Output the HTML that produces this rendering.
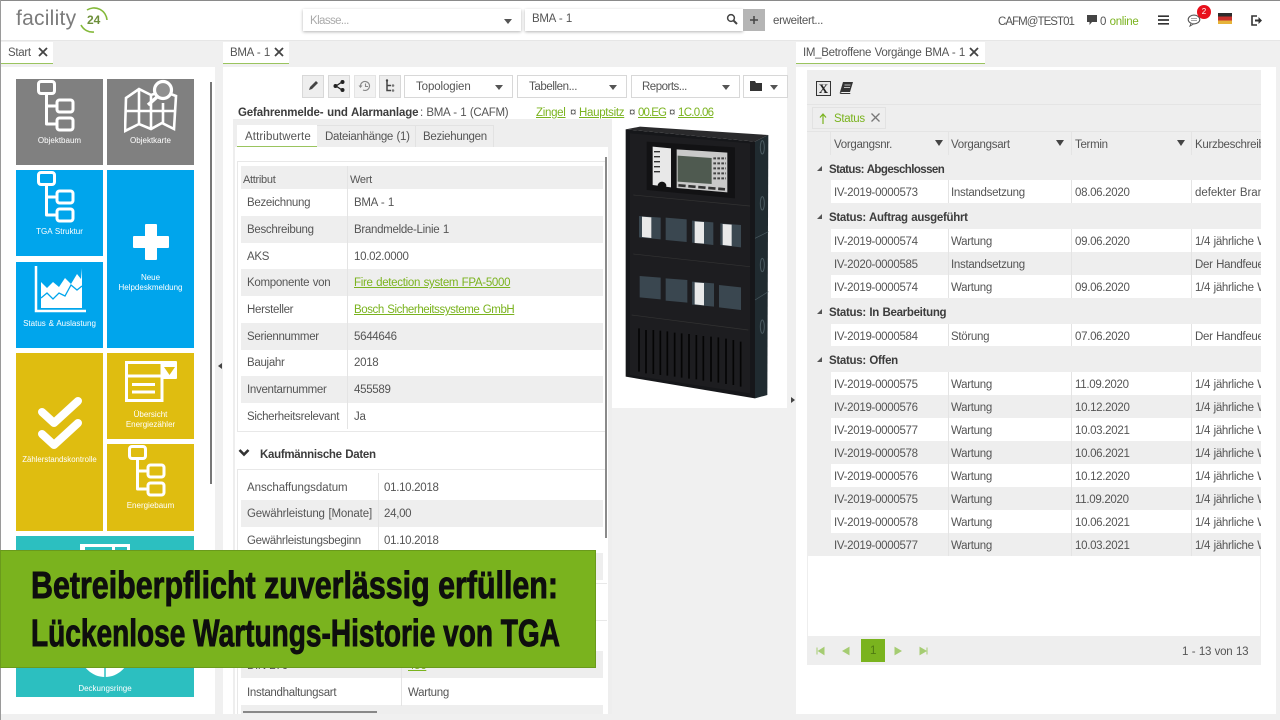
<!DOCTYPE html>
<html lang="de"><head><meta charset="utf-8"><title>facility 24</title>
<style>
html,body{margin:0;padding:0;width:1280px;height:720px;overflow:hidden;background:#f0f0f0}
body{position:relative;font:11.5px/16px "Liberation Sans",sans-serif;letter-spacing:-.3px;word-spacing:.6px;color:#555}
div,span,a,b,svg{position:absolute;display:block}
span,a,b{white-space:nowrap;margin-top:1px}
a{color:#7ab31e;text-decoration:underline}
b{color:#3c3c3c}
.p{background:#fff}
.g{background:#eee}
.tab{background:#fff;border-bottom:1px solid #9ac45e;height:21px;top:42px}
.tile{color:#fff;font-size:8px;line-height:10px;letter-spacing:0;text-align:center}
.tile span{left:0;right:0;white-space:normal}
.btn{top:75px;width:20px;height:21px;background:#eee;border:1px solid #d8d8d8}
.dd{top:75px;height:21px;background:#fff;border:1px solid #d8d8d8}
.dd span{left:11px;top:2px;letter-spacing:-.1px}
.dd i{position:absolute;right:9px;top:9px;border:4px solid transparent;border-top:5px solid #555;border-bottom:0}
.row{left:241px;width:362px;height:27px}
.row span,.row a{top:5px}
.k{left:6px}.v{left:113px}
.col{width:1px;background:#e4e4e4}
.gr{left:807px;width:454px;height:23px;background:#eee}
.gr b{left:22px;top:4px}
.gr i{position:absolute;left:10px;top:9px;width:0;height:0;border-left:5px solid transparent;border-bottom:5px solid #555}
.tr{left:831px;width:430px;height:23px;background:#fff}
.tr.o{background:#eee}
.tr span{top:4px}
.c1{left:3px}.c2{left:120px}.c3{left:244px}.c4{left:364px;width:66px;overflow:hidden}
.hd{top:136px}
.ft{top:140px;width:0;height:0;border:4px solid transparent;border-top:6px solid #444;border-bottom:0}
</style></head><body>
<svg width="0" height="0" style="position:absolute"><defs>
<symbol id="tree" viewBox="0 0 38 52"><g fill="none" stroke="#fff" stroke-width="3" stroke-linejoin="round"><rect x="1.500" y="1.500" width="16" height="12" rx="2.500"/><rect x="20" y="20" width="16" height="12" rx="2.500"/><rect x="20" y="38" width="16" height="12" rx="2.500"/><path d="M9.500 13.500V44H20M9.500 26H20"/></g></symbol>
</defs></svg>

<!-- top bar -->
<div style="left:0;top:0;width:1280px;height:40px;background:#fff;border-bottom:1px solid #e6e6e6"></div>
<div style="left:0;top:0;width:1280px;height:1px;background:#8a8a8a"></div>
<div style="left:0;top:0;width:1px;height:720px;background:#9a9a9a"></div>
<span style="left:16px;top:6px;font-size:21px;line-height:24px;color:#7b7b7b;letter-spacing:.25px">facility</span>
<svg style="left:78px;top:4px" width="34" height="32" viewBox="0 0 34 32"><path d="M9 6A13 13 0 0 1 29 16" fill="none" stroke="#84b93a" stroke-width="1.600"/><path d="M3 21A13 13 0 0 0 16 28" fill="none" stroke="#84b93a" stroke-width="1.600"/><text x="9" y="20" font-family="Liberation Sans" font-size="12" font-weight="bold" fill="#6d8f3a" letter-spacing="0">24</text></svg>

<div style="left:303px;top:9px;width:218px;height:22px;background:#fff;box-shadow:0 1px 3px rgba(0,0,0,.3)"></div>
<span style="left:310px;top:12px;color:#aaa;letter-spacing:-.6px">Klasse...</span>
<div style="left:504px;top:19px;border:4px solid transparent;border-top:5px solid #555;border-bottom:0;width:0;height:0"></div>
<div style="left:525px;top:9px;width:218px;height:22px;background:#fff;box-shadow:0 1px 3px rgba(0,0,0,.3)"></div>
<span style="left:532px;top:10px">BMA - 1</span>
<svg style="left:726px;top:13px" width="12" height="12" viewBox="0 0 12 12"><circle cx="5" cy="5" r="3.400" fill="none" stroke="#444" stroke-width="1.500"/><path d="M7.500 7.500L11 11" stroke="#444" stroke-width="2"/></svg>
<div style="left:743px;top:9px;width:22px;height:22px;background:#b5b5b5"></div>
<svg style="left:749px;top:15px" width="10" height="10"><path d="M5 1V9M1 5H9" stroke="#444" stroke-width="1.500"/></svg>
<span style="left:773px;top:12px">erweitert...</span>
<span style="left:998px;top:13px;letter-spacing:-.95px">CAFM@TEST01</span>
<svg style="left:1087px;top:15px" width="11" height="11" viewBox="0 0 11 11"><path d="M0 0H10V7H5L2.500 10V7H0Z" fill="#444"/></svg>
<span style="left:1100px;top:13px">0 <span style="position:static;display:inline;color:#7ab31e">online</span></span>
<svg style="left:1158px;top:15px" width="11" height="10"><path d="M0 1.200H11M0 5H11M0 8.800H11" stroke="#333" stroke-width="1.700"/></svg>
<svg style="left:1187px;top:14px" width="14" height="13" viewBox="0 0 14 13"><ellipse cx="7" cy="5.500" rx="5.800" ry="4.400" fill="none" stroke="#555" stroke-width="1.100"/><path d="M4 9.500L3 12 6.500 10" fill="#fff" stroke="#555"/><path d="M4 4.500H10M4 6.500H10" stroke="#888" stroke-width=".7"/></svg>
<div style="left:1197px;top:5px;width:14px;height:14px;border-radius:7px;background:#e8101c;color:#fff;font-size:8px;line-height:14px;text-align:center;letter-spacing:0">2</div>
<div style="left:1218px;top:13px;width:14px;height:11px;background:linear-gradient(#2c2c2c 0 33%,#c9302c 33% 66%,#e6b43a 66%)"></div>
<svg style="left:1250px;top:14px" width="12" height="13" viewBox="0 0 12 13"><path d="M7 2H2V11H7" fill="none" stroke="#333" stroke-width="1.600"/><path d="M5 5.500H8.500V3L12 6.500 8.500 10V7.500H5Z" fill="#333"/></svg>

<!-- tabs -->
<div class="tab" style="left:1px;width:52px"></div><span style="left:8px;top:44px">Start</span>
<svg style="left:38px;top:47px" width="10" height="10"><path d="M1 1L9 9M9 1L1 9" stroke="#444" stroke-width="1.800"/></svg>
<div class="tab" style="left:223px;width:66px"></div><span style="left:230px;top:44px">BMA - 1</span>
<svg style="left:274px;top:47px" width="10" height="10"><path d="M1 1L9 9M9 1L1 9" stroke="#444" stroke-width="1.800"/></svg>
<div class="tab" style="left:796px;width:189px"></div><span style="left:803px;top:44px">IM_Betroffene Vorgänge BMA - 1</span>
<svg style="left:969px;top:47px" width="10" height="10"><path d="M1 1L9 9M9 1L1 9" stroke="#444" stroke-width="1.800"/></svg>

<!-- panels -->
<div class="p" style="left:1px;top:67px;width:214px;height:647px"></div>
<div class="p" style="left:223px;top:67px;width:564px;height:647px"></div>
<div class="p" style="left:796px;top:67px;width:480px;height:647px"></div>
<div style="left:218px;top:363px;width:0;height:0;border:3px solid transparent;border-right:4px solid #444;border-left:0"></div>
<div style="left:791px;top:397px;width:0;height:0;border:3px solid transparent;border-left:4px solid #444;border-right:0"></div>

<!-- tiles -->
<div style="left:210px;top:82px;width:2px;height:402px;background:#777"></div>
<div class="tile" style="left:16px;top:79px;width:87px;height:86px;background:#808080"><svg style="left:21px;top:1px" width="38" height="52"><use href="#tree"/></svg><span style="top:56px">Objektbaum</span></div>
<div class="tile" style="left:107px;top:79px;width:87px;height:86px;background:#808080">
<svg style="left:17px;top:0" width="54" height="54" viewBox="0 0 54 54"><path d="M2 19L15 10 27 16 39 12 52 17 50 50 38 44 27 50 15 45 1 52Z M15 10L15 45M27 16V50M39 24V44M2 32L50 32" fill="none" stroke="#fff" stroke-width="2.600"/><circle cx="39" cy="11" r="8.500" fill="#8f8f8f" stroke="#fff" stroke-width="3.200"/><path d="M33 18L24 26" stroke="#fff" stroke-width="3.500"/></svg>
<span style="top:56px">Objektkarte</span></div>
<div class="tile" style="left:16px;top:170px;width:87px;height:86px;background:#00a5ec"><svg style="left:21px;top:1px" width="38" height="52"><use href="#tree"/></svg><span style="top:56px">TGA Struktur</span></div>
<div class="tile" style="left:107px;top:170px;width:87px;height:178px;background:#00a5ec"><svg style="left:25px;top:53px" width="38" height="38"><path d="M14 2H24V14H36V24H24V36H14V24H2V14H14Z" fill="#fff" stroke="#fff" stroke-width="2" stroke-linejoin="round"/></svg><span style="top:102px">Neue<br>Helpdeskmeldung</span></div>
<div class="tile" style="left:16px;top:262px;width:87px;height:86px;background:#00a5ec"><svg style="left:18px;top:4px" width="52" height="48" viewBox="0 0 52 48"><path d="M2 0V45H52" fill="none" stroke="#fff" stroke-width="2.500"/><path d="M7 16L13 22 19 16 25 21 31 12 37 18 43 8 47 13 48 2V42H7Z" fill="#fff"/><path d="M7 32L13 27 19 33 25 27 31 30 37 19 43 24 48 20" fill="none" stroke="#00a5ec" stroke-width="1.300"/></svg><span style="top:56px">Status &amp; Auslastung</span></div>
<div class="tile" style="left:16px;top:353px;width:87px;height:178px;background:#dfbd10"><svg style="left:22px;top:44px" width="44" height="56" viewBox="0 0 44 56"><path d="M4 15L16 26 40 4M4 37L16 48 40 26" fill="none" stroke="#fff" stroke-width="8" stroke-linecap="round" stroke-linejoin="round"/></svg><span style="top:101px;font-size:7.800px">Zählerstandskontrolle</span></div>
<div class="tile" style="left:107px;top:353px;width:87px;height:86px;background:#dfbd10"><svg style="left:18px;top:8px" width="52" height="41" viewBox="0 0 52 41"><path d="M1.500 1.500H37V39.500H1.500ZM1.500 15H37" fill="none" stroke="#fff" stroke-width="3"/><rect x="36" y="0" width="16" height="18" rx="1" fill="#fff"/><path d="M39 6H50L44.500 14Z" fill="#dfbd10"/><path d="M7 23.500H30M7 31H30" stroke="#fff" stroke-width="3"/></svg><span style="top:56px">Übersicht<br>Energiezähler</span></div>
<div class="tile" style="left:107px;top:444px;width:87px;height:87px;background:#dfbd10"><svg style="left:21px;top:1px" width="38" height="52"><use href="#tree"/></svg><span style="top:56px">Energiebaum</span></div>
<div class="tile" style="left:16px;top:536px;width:178px;height:161px;background:#2cbfc0"><div style="left:64px;top:8px;width:50px;height:12px;background:#fff"></div><div style="left:69px;top:11px;width:27px;height:9px;background:#2cbfc0"></div><div style="left:99px;top:11px;width:12px;height:9px;background:#2cbfc0"></div><svg style="left:64px;top:108px" width="50" height="36"><path d="M0 8A25 25 0 0 0 50 8V0H0Z" fill="#fff"/><path d="M25 6V36" stroke="#2cbfc0" stroke-width="1.500"/></svg><span style="top:147px">Deckungsringe</span></div>

<!-- mid toolbar -->
<div class="btn" style="left:302px"></div>
<svg style="left:306px;top:79px" width="14" height="14"><path d="M3 11L4 8 10 2 12 4 6 10Z" fill="#444"/></svg>
<div class="btn" style="left:328px"></div>
<svg style="left:332px;top:79px" width="14" height="14" viewBox="0 0 14 14"><path d="M10 3L4 7 10 11" fill="none" stroke="#222" stroke-width="1.300"/><circle cx="10.500" cy="3" r="2" fill="#222"/><circle cx="10.500" cy="11" r="2" fill="#222"/><circle cx="3.500" cy="7" r="2" fill="#222"/></svg>
<div class="btn" style="left:354px;background:#f2f2f2;border-color:#e4e4e4"></div>
<svg style="left:358px;top:79px" width="14" height="14" viewBox="0 0 14 14"><path d="M2.500 7A4.500 4.500 0 1 1 5 11M7.500 4.500V7.500H10" fill="none" stroke="#888" stroke-width="1.100"/><path d="M0.500 6.500H4.500L2.500 9Z" fill="#888"/></svg>
<div class="btn" style="left:379px"></div>
<svg style="left:383px;top:79px" width="14" height="14" viewBox="0 0 14 14"><path d="M4 1.500V11.500H8M4 6.500H8" fill="none" stroke="#444" stroke-width="1.500"/><circle cx="4" cy="1.500" r="1.200" fill="#444"/><circle cx="10" cy="6.500" r="1.300" fill="#777"/><circle cx="10" cy="11.500" r="1.300" fill="#777"/></svg>
<div class="dd" style="left:404px;width:107px"><span>Topologien</span><i></i></div>
<div class="dd" style="left:517px;width:108px"><span style="letter-spacing:-.4px">Tabellen...</span><i></i></div>
<div class="dd" style="left:631px;width:107px"><span style="left:10px;letter-spacing:-.5px">Reports...</span><i></i></div>
<div class="dd" style="left:743px;width:43px"><i></i></div>
<svg style="left:750px;top:81px" width="12" height="10"><path d="M0 0H5L6 2H12V10H0Z" fill="#333"/></svg>

<b style="left:238px;top:104px;letter-spacing:-.15px">Gefahrenmelde- und Alarmanlage</b><span style="left:420px;top:104px">: BMA - 1 (CAFM)</span>
<a style="left:536px;top:104px">Zingel</a><span style="left:570px;top:104px">¤</span>
<a style="left:579px;top:104px">Hauptsitz</a><span style="left:629px;top:104px">¤</span>
<a style="left:638px;top:104px;letter-spacing:-.9px">00.EG</a><span style="left:669px;top:104px">¤</span>
<a style="left:678px;top:104px;letter-spacing:-.7px">1C.0.06</a>

<!-- attribute tab box -->
<div class="g" style="left:233px;top:119px;width:379px;height:595px"></div>
<div class="p" style="left:235px;top:147px;width:373px;height:567px"></div>
<div class="p" style="left:237px;top:125px;width:80px;height:21px;border-bottom:1px solid #9ac45e"></div>
<span style="left:245px;top:128px;letter-spacing:.1px">Attributwerte</span>
<div style="left:317px;top:125px;width:99px;height:22px;border:solid #e2e2e2;border-width:1px 1px 0 0;box-sizing:border-box"></div>
<span style="left:325px;top:128px">Dateianhänge (1)</span>
<div style="left:416px;top:125px;width:78px;height:22px;border:solid #e2e2e2;border-width:1px 1px 0 0;box-sizing:border-box"></div>
<span style="left:423px;top:128px">Beziehungen</span>
<div style="left:237px;top:161px;width:370px;height:271px;border:solid #e8e8e8;border-width:1px 0 1px 1px;box-sizing:border-box"></div>
<div class="g" style="left:241px;top:166px;width:362px;height:23px"></div>
<span style="left:243px;top:171px;font-size:11px">Attribut</span><span style="left:350px;top:171px;font-size:11px">Wert</span>

<div class="row" style="top:189px"><span class="k">Bezeichnung</span><span class="v">BMA - 1</span></div>
<div class="row g" style="top:216px"><span class="k">Beschreibung</span><span class="v">Brandmelde-Linie 1</span></div>
<div class="row" style="top:243px"><span class="k">AKS</span><span class="v">10.02.0000</span></div>
<div class="row g" style="top:269px"><span class="k">Komponente von</span><a class="v">Fire detection system FPA-5000</a></div>
<div class="row" style="top:296px"><span class="k">Hersteller</span><a class="v" style="letter-spacing:-.42px">Bosch Sicherheitssysteme GmbH</a></div>
<div class="row g" style="top:323px"><span class="k">Seriennummer</span><span class="v">5644646</span></div>
<div class="row" style="top:349px"><span class="k">Baujahr</span><span class="v">2018</span></div>
<div class="row g" style="top:376px"><span class="k">Inventarnummer</span><span class="v">455589</span></div>
<div class="row" style="top:403px"><span class="k">Sicherheitsrelevant</span><span class="v">Ja</span></div>
<div class="col" style="left:347px;top:166px;height:263px"></div>

<svg style="left:238px;top:448px" width="12" height="10"><path d="M1.500 2L6 6.500 10.500 2" fill="none" stroke="#333" stroke-width="2.600"/></svg>
<b style="left:260px;top:446px">Kaufmännische Daten</b>
<div style="left:237px;top:469px;width:370px;height:115px;border:solid #e8e8e8;border-width:1px 0 1px 1px;box-sizing:border-box"></div>
<div class="row" style="top:474px"><span class="k" style="letter-spacing:-.05px">Anschaffungsdatum</span><span class="v" style="left:143px">01.10.2018</span></div>
<div class="row g" style="top:500px"><span class="k" style="letter-spacing:-.15px">Gewährleistung [Monate]</span><span class="v" style="left:143px">24,00</span></div>
<div class="row" style="top:527px"><span class="k">Gewährleistungsbeginn</span><span class="v" style="left:143px">01.10.2018</span></div>
<div class="row g" style="top:553px"></div>
<div class="col" style="left:378px;top:473px;height:77px"></div>
<div style="left:237px;top:620px;width:370px;height:94px;border:solid #e8e8e8;border-width:1px 0 0 1px;box-sizing:border-box"></div>
<div class="row g" style="top:651px"><span class="k" style="top:6px">DIN 276</span><a class="v" style="left:167px;top:6px">456</a></div>
<div class="row" style="top:679px"><span class="k">Instandhaltungsart</span><span class="v" style="left:167px">Wartung</span></div>
<div class="row g" style="top:705px;height:9px"></div>
<div class="col" style="left:401px;top:651px;height:55px"></div>
<div style="left:243px;top:711px;width:134px;height:2px;background:#888"></div>
<div style="left:605px;top:157px;width:2px;height:381px;background:#8a8a8a"></div>

<!-- device image -->
<div class="p" style="left:612px;top:120px;width:175px;height:288px"></div>
<div style="left:612px;top:408px;width:175px;height:306px;background:#f0f0f0"></div>
<svg style="left:610px;top:110px" width="190" height="300" viewBox="0 0 570 900">
<path d="M435 95L475 75 472 855 435 865Z" fill="#202b30"/>
<path d="M47 58L90 50 475 75 435 95Z" fill="#2a2a2c"/>
<path d="M47 58L435 95 435 865 47 800Z" fill="#16171a"/>
<path d="M60 70L420 100 420 850 60 795Z" fill="#1d1d20"/>
<path d="M110 95L375 112V265L110 240Z" fill="#121214"/>
<path d="M128 110L183 115V232L128 225Z" fill="#e8e8e8"/>
<path d="M132 125H150M132 140H150M132 155H150M132 170H150M132 185H150" stroke="#333" stroke-width="4"/>
<circle cx="156" cy="228" r="13" fill="#111"/>
<path d="M200 118L352 128V247L200 234Z" fill="#c9c9c9"/>
<path d="M203 137L305 144V222L203 215Z" fill="#4f5a50"/>
<path d="M310 145H348M310 160H348M310 175H348M310 190H348M310 205H348" stroke="#444" stroke-width="6" stroke-dasharray="8 4"/>
<path d="M205 226L345 238" stroke="#333" stroke-width="8" stroke-dasharray="22 8"/>
<path d="M70 255L420 288M70 432L420 470M65 615L415 660" stroke="#333" stroke-width="2"/>
<path d="M87 318L152 323V388L87 382Z" fill="#3a4750"/><path d="M96 320L124 322V384L96 381Z" fill="#e9e9e9"/>
<path d="M167 323L230 328V396L167 390Z" fill="#3a4750"/>
<path d="M246 332L310 337V405L246 398Z" fill="#3a4750"/><path d="M254 334L282 336V401L254 399Z" fill="#e9e9e9"/>
<path d="M331 340L393 345V412L331 405Z" fill="#3a4750"/><path d="M338 342L365 344V408L338 405Z" fill="#e9e9e9"/>
<path d="M89 498L152 503V568L89 562Z" fill="#3a4750"/>
<path d="M167 505L232 510V578L167 572Z" fill="#3a4750"/>
<path d="M246 515L312 520V590L246 584Z" fill="#3a4750"/><path d="M254 517L282 519V586L254 583Z" fill="#e9e9e9"/>
<path d="M327 525L393 532V600L327 592Z" fill="#3a4750"/>
<path d="M87 655V785M108 660V790M130 660V792M151 662V795M172 664V797M194 668V800M215 670V803M237 672V806M259 675V808M280 678V812M303 680V815M325 682V818M348 686V822M370 690V825M392 695V830" stroke="#050505" stroke-width="5"/>
<ellipse cx="457" cy="112" rx="6" ry="20" fill="none" stroke="#4a5a60" stroke-width="3"/>
<ellipse cx="457" cy="280" rx="6" ry="20" fill="none" stroke="#4a5a60" stroke-width="3"/>
<ellipse cx="457" cy="465" rx="6" ry="20" fill="none" stroke="#4a5a60" stroke-width="3"/>
<ellipse cx="457" cy="650" rx="6" ry="20" fill="none" stroke="#4a5a60" stroke-width="3"/>
<path d="M435 385L475 365M435 570L475 545" stroke="#4a5a60" stroke-width="2"/>
</svg>

<!-- right grid -->
<div class="g" style="left:807px;top:70px;width:454px;height:88px"></div>
<div class="p" style="left:807px;top:158px;width:454px;height:478px;border-left:1px solid #eee;border-right:1px solid #eee;box-sizing:border-box"></div>
<div style="left:807px;top:104px;width:454px;height:1px;background:#e4e4e4"></div>
<div style="left:807px;top:131px;width:454px;height:1px;background:#e4e4e4"></div>
<div style="left:816px;top:81px;width:13px;height:13px;border:1.500px solid #333;background:#e8e8e8;color:#222;font:bold 13px/13px 'Liberation Serif',serif;text-align:center;letter-spacing:0">X</div>
<svg style="left:839px;top:81px" width="15" height="14" viewBox="0 0 15 14"><path d="M4 1H14L11 11H1Z" fill="#333"/><path d="M1 11Q0 13 2.500 13H11L11.500 12H3" fill="#333"/><path d="M5.500 4H11.500M5 6.500H11" stroke="#eee" stroke-width=".8"/></svg>
<div style="left:812px;top:107px;width:74px;height:22px;border:1px solid #e2e2e2;box-sizing:border-box"></div>
<svg style="left:819px;top:113px" width="8" height="11"><path d="M4 11V2M1 4.500L4 1 7 4.500" fill="none" stroke="#7ab31e" stroke-width="1.200"/></svg>
<span style="left:834px;top:110px;color:#7ab31e">Status</span>
<svg style="left:871px;top:113px" width="9" height="9"><path d="M0.500 0.500L8.500 8.500M8.500 0.500L0.500 8.500" stroke="#777" stroke-width="1.300"/></svg>
<div class="col" style="left:830px;top:132px;height:23px"></div><div class="col" style="left:948px;top:132px;height:23px"></div><div class="col" style="left:1071px;top:132px;height:23px"></div><div class="col" style="left:1191px;top:132px;height:23px"></div>
<span class="hd" style="left:834px">Vorgangsnr.</span><div class="ft" style="left:935px"></div>
<span class="hd" style="left:951px">Vorgangsart</span><div class="ft" style="left:1056px"></div>
<span class="hd" style="left:1075px">Termin</span><div class="ft" style="left:1177px"></div>
<span class="hd" style="left:1195px;width:66px;overflow:hidden">Kurzbeschreibung</span>

<div style="left:807px;top:157px;width:24px;height:399px;background:#eee"></div>
<div class="gr" style="top:157px"><i></i><b style="letter-spacing:-.58px">Status: Abgeschlossen</b></div>
<div class="tr" style="top:180px"><span class="c1">IV-2019-0000573</span><span class="c2">Instandsetzung</span><span class="c3">08.06.2020</span><span class="c4" style="letter-spacing:-.05px">defekter Brandmelder</span></div>
<div class="gr" style="top:203px;height:26px"><i style="top:11px"></i><b style="top:6px">Status: Auftrag ausgeführt</b></div>
<div class="tr" style="top:229px"><span class="c1">IV-2019-0000574</span><span class="c2">Wartung</span><span class="c3">09.06.2020</span><span class="c4">1/4 jährliche Wartung</span></div>
<div class="tr o" style="top:252px"><span class="c1">IV-2020-0000585</span><span class="c2">Instandsetzung</span><span class="c4">Der Handfeuermelder</span></div>
<div class="tr" style="top:275px"><span class="c1">IV-2019-0000574</span><span class="c2">Wartung</span><span class="c3">09.06.2020</span><span class="c4">1/4 jährliche Wartung</span></div>
<div class="gr" style="top:298px;height:26px"><i style="top:11px"></i><b style="top:6px">Status: In Bearbeitung</b></div>
<div class="tr" style="top:324px"><span class="c1">IV-2019-0000584</span><span class="c2">Störung</span><span class="c3">07.06.2020</span><span class="c4">Der Handfeuermelder</span></div>
<div class="gr" style="top:346px;height:26px"><i style="top:11px"></i><b style="top:6px">Status: Offen</b></div>
<div class="tr" style="top:372px"><span class="c1">IV-2019-0000575</span><span class="c2">Wartung</span><span class="c3">11.09.2020</span><span class="c4">1/4 jährliche Wartung</span></div>
<div class="tr o" style="top:395px"><span class="c1">IV-2019-0000576</span><span class="c2">Wartung</span><span class="c3">10.12.2020</span><span class="c4">1/4 jährliche Wartung</span></div>
<div class="tr" style="top:418px"><span class="c1">IV-2019-0000577</span><span class="c2">Wartung</span><span class="c3">10.03.2021</span><span class="c4">1/4 jährliche Wartung</span></div>
<div class="tr o" style="top:441px"><span class="c1">IV-2019-0000578</span><span class="c2">Wartung</span><span class="c3">10.06.2021</span><span class="c4">1/4 jährliche Wartung</span></div>
<div class="tr" style="top:464px"><span class="c1">IV-2019-0000576</span><span class="c2">Wartung</span><span class="c3">10.12.2020</span><span class="c4">1/4 jährliche Wartung</span></div>
<div class="tr o" style="top:487px"><span class="c1">IV-2019-0000575</span><span class="c2">Wartung</span><span class="c3">11.09.2020</span><span class="c4">1/4 jährliche Wartung</span></div>
<div class="tr" style="top:510px"><span class="c1">IV-2019-0000578</span><span class="c2">Wartung</span><span class="c3">10.06.2021</span><span class="c4">1/4 jährliche Wartung</span></div>
<div class="tr o" style="top:533px"><span class="c1">IV-2019-0000577</span><span class="c2">Wartung</span><span class="c3">10.03.2021</span><span class="c4">1/4 jährliche Wartung</span></div>
<div class="col" style="left:948px;top:180px;height:23px"></div><div class="col" style="left:1071px;top:180px;height:23px"></div><div class="col" style="left:1191px;top:180px;height:23px"></div>
<div class="col" style="left:948px;top:229px;height:69px"></div><div class="col" style="left:1071px;top:229px;height:69px"></div><div class="col" style="left:1191px;top:229px;height:69px"></div>
<div class="col" style="left:948px;top:324px;height:22px"></div><div class="col" style="left:1071px;top:324px;height:22px"></div><div class="col" style="left:1191px;top:324px;height:22px"></div>
<div class="col" style="left:948px;top:372px;height:184px"></div><div class="col" style="left:1071px;top:372px;height:184px"></div><div class="col" style="left:1191px;top:372px;height:184px"></div>

<div class="g" style="left:807px;top:636px;width:454px;height:29px"></div>
<svg style="left:816px;top:646px" width="120" height="10" viewBox="0 0 120 10"><path d="M1 1.500V8.500M8 1.500V8.500L2.500 5ZM33 1.500V8.500L27 5ZM79 1.500V8.500L85 5ZM104 1.500V8.500L110 5ZM111 1.500V8.500" fill="#a5cc72" stroke="#a5cc72" stroke-width="1"/></svg>
<div style="left:861px;top:639px;width:24px;height:23px;background:#7ab31e;color:#4f7a12;text-align:center;line-height:25px">1</div>
<span style="left:1182px;top:643px;letter-spacing:-.25px">1 - 13 von 13</span>

<!-- banner -->
<div style="left:0;top:550px;width:596px;height:118px;background:#7ab31e;border:1px solid #6a9a1c;box-sizing:border-box"></div>
<svg style="left:0;top:550px;word-spacing:0" width="596" height="118" viewBox="0 550 596 118">
<text x="31" y="598" font-family="Liberation Sans" font-weight="bold" font-size="38" fill="#0e0e0e" stroke="#0e0e0e" stroke-width=".9" textLength="527" lengthAdjust="spacingAndGlyphs" letter-spacing="0">Betreiberpflicht zuverlässig erfüllen:</text>
<text x="31" y="646" font-family="Liberation Sans" font-weight="bold" font-size="38" fill="#0e0e0e" stroke="#0e0e0e" stroke-width=".9" textLength="529" lengthAdjust="spacingAndGlyphs" letter-spacing="0">Lückenlose Wartungs-Historie von TGA</text>
</svg>
</body></html>
